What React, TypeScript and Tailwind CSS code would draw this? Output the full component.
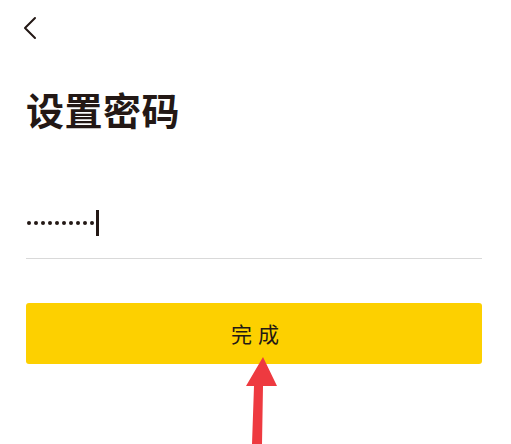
import React from 'react';

const font = { fontFamily: '"Noto Sans CJK SC", "Noto Sans", sans-serif' };

export default function App() {
  const dots = Array.from({ length: 10 });
  return (
    <div className="relative h-[444px] w-[511px] overflow-hidden bg-white" style={font}>
      <div className="flex h-[56px] items-center pl-[22px]">
        <svg width="16" height="24" viewBox="0 0 16 24" fill="none">
          <path d="M13 2 L3 12 L13 22" stroke="#231815" strokeWidth="2" strokeLinecap="round" strokeLinejoin="round" />
        </svg>
      </div>
      <h1 className="mt-[28px] pl-[26px] text-[38px] font-bold leading-[50px] tracking-[0.5px] text-[#231815]">设置密码</h1>
      <div className="ml-[26px] mr-[29px] mt-[74px] h-[51px] border-b border-[#d9d9d9]">
        <div className="flex h-[30px] items-center pl-[1px]">
          <div className="flex items-center gap-[3px]">
            {dots.map((_, i) => (
              <span key={i} className="h-[4px] w-[4px] rounded-full bg-[#231815]" />
            ))}
          </div>
          <span className="ml-[2px] h-[26px] w-[3px] bg-[#231815]" />
        </div>
      </div>
      <div className="ml-[26px] mr-[29px] mt-[44px]">
        <button
          type="button"
          className="flex h-[61px] w-full items-center justify-center rounded-[3px] bg-[#fdd000] pl-[8px] text-[21px] font-normal tracking-[6px] text-[#231815]"
        >
          完成
        </button>
      </div>
      <svg className="absolute left-0 top-0" width="511" height="444" viewBox="0 0 511 444">
        <polygon points="263,357 246,386 254,386 252,444 262,444 263,386 277,386" fill="#ee3a40" />
      </svg>
    </div>
  );
}
